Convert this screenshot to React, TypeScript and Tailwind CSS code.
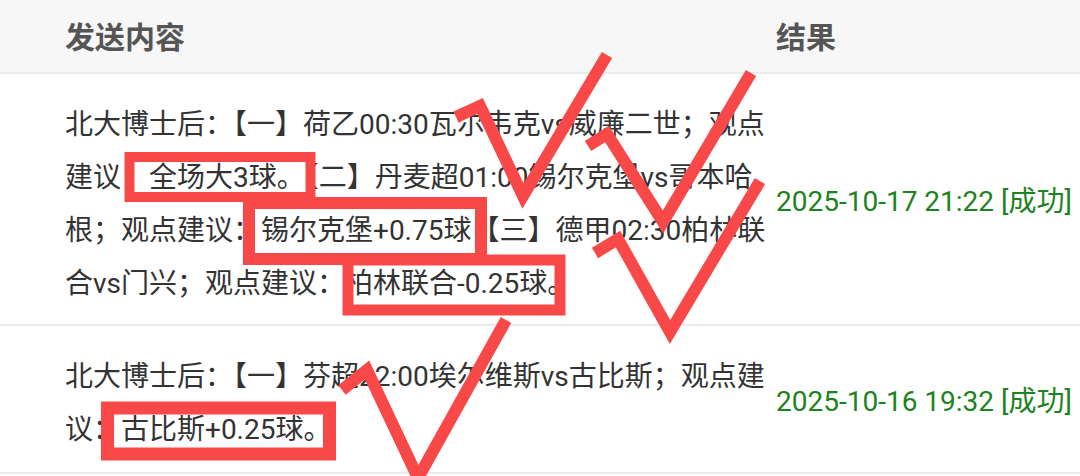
const rows = [
  {
    lines: [
      '北大博士后：【一】荷乙00:30瓦尔韦克vs威廉二世；观点',
      '建议：全场大3球。【二】丹麦超01:00锡尔克堡vs哥本哈',
      '根；观点建议：锡尔克堡+0.75球【三】德甲02:30柏林联',
      '合vs门兴；观点建议：柏林联合-0.25球。',
    ],
    result: '2025-10-17 21:22 [成功]',
  },
  {
    lines: [
      '北大博士后：【一】芬超22:00埃尔维斯vs古比斯；观点建',
      '议：古比斯+0.25球。',
    ],
    result: '2025-10-16 19:32 [成功]',
  },
];

// hand-drawn annotation boxes, stroke centre lines
const boxes = [
  { x: 129.5, y: 157, w: 181, h: 40, s: 10 },
  { x: 249, y: 203, w: 232, h: 56, s: 12 },
  { x: 348, y: 260, w: 212, h: 50, s: 11 },
  { x: 107.5, y: 408, w: 222, h: 46, s: 13 },
];

const checks = [
  '456,117 480,106 523,196 607,55',
  '588,146 607,134 663,222 751,73',
  '595,253 618,239 670,332 760,181',
  '342,390 367,370 418,478 506,320',
];

const App = () => {
  return (
    <div
      className="relative w-[1080px] h-[476px] overflow-hidden bg-white"
      style={{ fontFamily: 'Roboto, "Noto Sans CJK SC", sans-serif' }}
    >
      <div className="grid grid-cols-[768px_1fr] items-center h-[74px] bg-[#f7f7f7] border-b-2 border-[#ebebeb]">
        <div className="pl-[65px] pt-[2px] text-[30px] font-bold text-[#555555]">发送内容</div>
        <div className="pl-[8px] pt-[2px] text-[30px] font-bold text-[#555555]">结果</div>
      </div>

      {rows.map((row, i) => (
        <div
          key={i}
          className="grid grid-cols-[768px_1fr] items-center border-b-2 border-[#ebebeb]"
        >
          <div
            className={`pl-[65px] pt-[24px] text-[28px] leading-[53px] text-[#333333] whitespace-nowrap ${
              i === 0 ? 'pb-[14px]' : 'pb-[16px]'
            }`}
          >
            {row.lines.map((line, j) => (
              <div key={j}>{line}</div>
            ))}
          </div>
          <div className="pl-[8px] pt-[6px] text-[28px] text-[#1c8320] whitespace-nowrap">{row.result}</div>
        </div>
      ))}

      <svg
        className="absolute inset-0 pointer-events-none"
        width="1080"
        height="476"
        viewBox="0 0 1080 476"
      >
        {boxes.map((b, i) => (
          <rect
            key={i}
            x={b.x}
            y={b.y}
            width={b.w}
            height={b.h}
            fill="none"
            stroke="#f94848"
            strokeWidth={b.s}
          />
        ))}
        {checks.map((p, i) => (
          <polyline
            key={i}
            points={p}
            fill="none"
            stroke="#f94848"
            strokeWidth="12"
            strokeLinejoin="miter"
            strokeLinecap="butt"
          />
        ))}
      </svg>
    </div>
  );
};

export default App;
